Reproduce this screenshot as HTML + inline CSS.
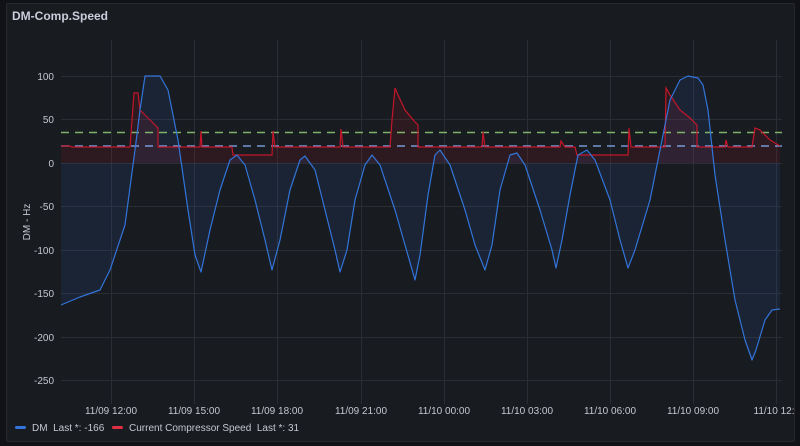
<!DOCTYPE html>
<html><head><meta charset="utf-8"><style>
body{margin:0;background:#111217;width:800px;height:446px;overflow:hidden;font-family:"Liberation Sans",sans-serif;}
.panel{position:absolute;left:6px;top:3px;width:787px;height:437px;background:#181b1f;border:1px solid #25282d;border-radius:2px;}
.title{position:absolute;left:12px;top:9px;color:#ccccdc;font-size:12px;font-weight:bold;}
svg{position:absolute;left:0;top:0}
text{font-family:"Liberation Sans",sans-serif;font-size:10px;fill:#c7c7d0;white-space:pre}
</style></head><body>
<div class="panel"></div>
<div class="title">DM-Comp.Speed</div>
<svg width="800" height="446">
<g stroke="#2a2d33" stroke-width="1">
<line x1="61" y1="76.5" x2="782" y2="76.5"/><line x1="61" y1="119.5" x2="782" y2="119.5"/><line x1="61" y1="163.5" x2="782" y2="163.5"/>
<line x1="61" y1="206.5" x2="782" y2="206.5"/><line x1="61" y1="250.5" x2="782" y2="250.5"/><line x1="61" y1="293.5" x2="782" y2="293.5"/>
<line x1="61" y1="337.5" x2="782" y2="337.5"/><line x1="61" y1="380.5" x2="782" y2="380.5"/>
<line x1="111.5" y1="40" x2="111.5" y2="404"/><line x1="194.5" y1="40" x2="194.5" y2="404"/><line x1="277.5" y1="40" x2="277.5" y2="404"/><line x1="361.5" y1="40" x2="361.5" y2="404"/><line x1="444.5" y1="40" x2="444.5" y2="404"/><line x1="527.5" y1="40" x2="527.5" y2="404"/><line x1="610.5" y1="40" x2="610.5" y2="404"/><line x1="693.5" y1="40" x2="693.5" y2="404"/><line x1="776.5" y1="40" x2="776.5" y2="404"/>
</g>
<g text-anchor="end"><text x="54" y="80">100</text><text x="54" y="123">50</text><text x="54" y="167">0</text><text x="54" y="210">-50</text><text x="54" y="254">-100</text><text x="54" y="297">-150</text><text x="54" y="341">-200</text><text x="54" y="384">-250</text></g>
<text transform="translate(30,222) rotate(-90)" text-anchor="middle">DM - Hz</text>
<g text-anchor="middle"><text x="111" y="414">11/09 12:00</text><text x="194" y="414">11/09 15:00</text><text x="277" y="414">11/09 18:00</text><text x="361" y="414">11/09 21:00</text><text x="444" y="414">11/10 00:00</text><text x="527" y="414">11/10 03:00</text><text x="610" y="414">11/10 06:00</text><text x="693" y="414">11/10 09:00</text><text x="774" y="414">11/10 12:</text></g>
<path d="M61,163 L61,305 80,297 100,290 110,270 125,225 135,150 140,110 145,76 160,76 168,90 178,140 188,210 195,255 201,272 210,230 220,190 230,160 237,155 245,165 255,200 265,240 272,270 280,240 290,190 300,160 305,156 315,170 325,210 335,250 340,272 347,250 355,200 365,165 372,155 380,165 395,210 405,245 415,280 420,255 428,195 435,155 440,150 450,165 465,210 475,245 485,270 492,245 500,190 510,155 517,153 525,165 540,210 552,250 556,268 562,240 570,195 578,155 587,150 595,160 610,200 620,240 628,268 635,250 650,200 660,150 670,100 680,80 688,76 698,78 703,85 708,110 715,175 725,240 735,300 745,340 752,360 756,350 765,320 772,310 780,309 L780,163Z" fill="#2f6cd8" fill-opacity="0.12"/>
<path d="M61,163 L61,146 70,146 72,147 130,147 132,120 134,93 138,93 140,110 150,120 158,128 158,147 200,147 201,131 202,147 232,147 233,155 272,155 273,131 275,147 340,147 341,129 343,147 390,147 392,120 395,88 398,95 405,110 415,122 418,125 418,147 482,147 483,132 485,147 560,147 561,141 565,147 575,147 577,155 628,155 629,128 631,147 665,147 666,88 670,95 680,110 690,118 697,125 697,147 725,147 726,140 728,147 752,147 755,128 760,130 770,140 780,146 L780,163Z" fill="#c4162a" fill-opacity="0.12"/>
<line x1="61" y1="132.5" x2="782" y2="132.5" stroke="#7eb26d" stroke-width="1.5" stroke-dasharray="8,6"/>
<line x1="61" y1="146" x2="782" y2="146" stroke="#8ab8ff" stroke-opacity="0.8" stroke-width="1.5" stroke-dasharray="8,6"/>
<polyline fill="none" stroke="#c4162a" stroke-width="1.2" points="61,146 70,146 72,147 130,147 132,120 134,93 138,93 140,110 150,120 158,128 158,147 200,147 201,131 202,147 232,147 233,155 272,155 273,131 275,147 340,147 341,129 343,147 390,147 392,120 395,88 398,95 405,110 415,122 418,125 418,147 482,147 483,132 485,147 560,147 561,141 565,147 575,147 577,155 628,155 629,128 631,147 665,147 666,88 670,95 680,110 690,118 697,125 697,147 725,147 726,140 728,147 752,147 755,128 760,130 770,140 780,146"/>
<polyline fill="none" stroke="#3274d9" stroke-width="1.2" stroke-linejoin="round" points="61,305 80,297 100,290 110,270 125,225 135,150 140,110 145,76 160,76 168,90 178,140 188,210 195,255 201,272 210,230 220,190 230,160 237,155 245,165 255,200 265,240 272,270 280,240 290,190 300,160 305,156 315,170 325,210 335,250 340,272 347,250 355,200 365,165 372,155 380,165 395,210 405,245 415,280 420,255 428,195 435,155 440,150 450,165 465,210 475,245 485,270 492,245 500,190 510,155 517,153 525,165 540,210 552,250 556,268 562,240 570,195 578,155 587,150 595,160 610,200 620,240 628,268 635,250 650,200 660,150 670,100 680,80 688,76 698,78 703,85 708,110 715,175 725,240 735,300 745,340 752,360 756,350 765,320 772,310 780,309"/>
<rect x="15" y="426" width="11" height="3" rx="1.5" fill="#3274d9"/>
<text x="32" y="431" xml:space="preserve">DM  Last *: -166</text>
<rect x="112" y="426" width="11" height="3" rx="1.5" fill="#e02f44"/>
<text x="129" y="431" xml:space="preserve">Current Compressor Speed  Last *: 31</text>
</svg>
</body></html>
